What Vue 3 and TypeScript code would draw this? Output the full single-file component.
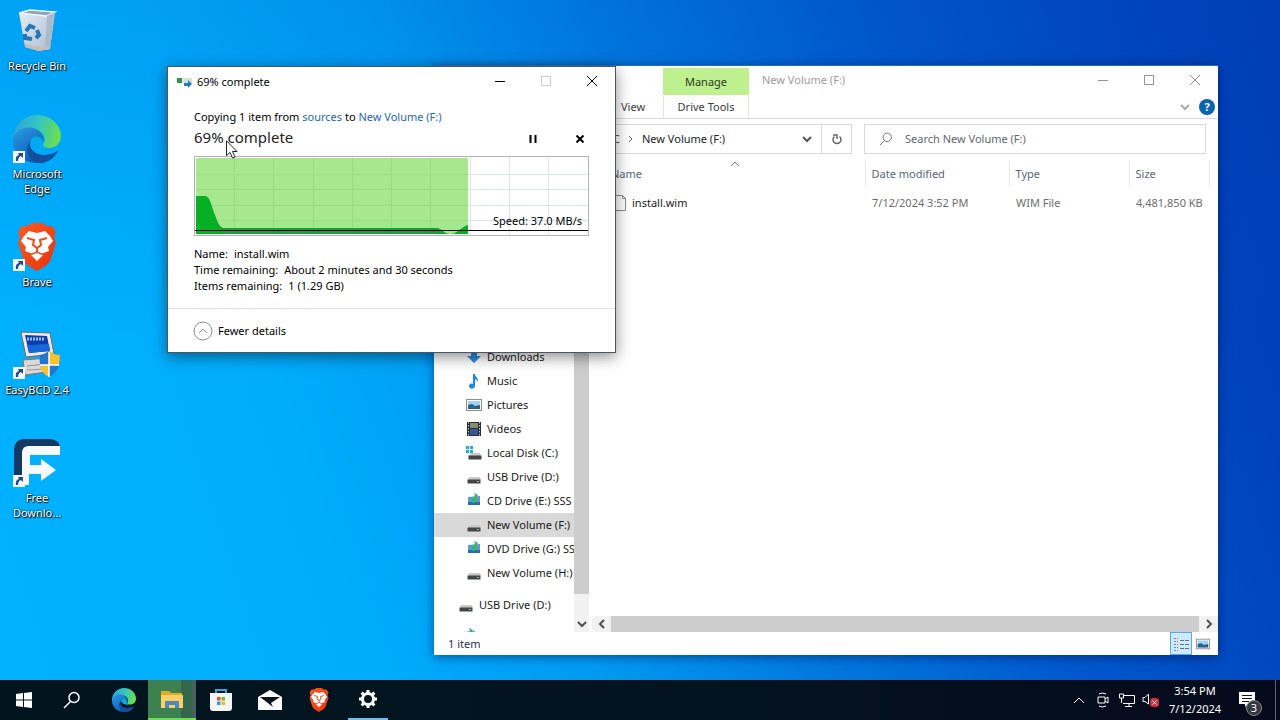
<script setup lang="ts">
import { ref } from 'vue'

interface Shortcut { label: string; icon: string; linked: boolean }
interface Place { label: string; icon: string; selected?: boolean }
interface FileRow { name: string; modified: string; type: string; size: string }

const shortcuts: Shortcut[] = [
  { label: 'Recycle Bin', icon: 'bin', linked: false },
  { label: 'Microsoft Edge', icon: 'edge', linked: true },
  { label: 'Brave', icon: 'brave', linked: true },
  { label: 'EasyBCD 2.4', icon: 'easybcd', linked: true },
  { label: 'Free Downlo...', icon: 'fdm', linked: true },
]

const places: Place[] = [
  { label: 'Downloads', icon: 'downloads' },
  { label: 'Music', icon: 'music' },
  { label: 'Pictures', icon: 'pictures' },
  { label: 'Videos', icon: 'videos' },
  { label: 'Local Disk (C:)', icon: 'sysdisk' },
  { label: 'USB Drive (D:)', icon: 'disk' },
  { label: 'CD Drive (E:) SSS', icon: 'disc' },
  { label: 'New Volume (F:)', icon: 'disk', selected: true },
  { label: 'DVD Drive (G:) SS', icon: 'disc' },
  { label: 'New Volume (H:)', icon: 'disk' },
]

const files: FileRow[] = [
  { name: 'install.wim', modified: '7/12/2024 3:52 PM', type: 'WIM File', size: '4,481,850 KB' },
]

const query = ref('')
const gridX = [39, 78, 118, 157, 196, 235, 275, 314, 353]
const gridY = [17, 32, 48, 63]
</script>

<template>
  <div class="screen">
    <svg class="sprite" aria-hidden="true">
      <defs>
        <linearGradient id="edgeTop" x1="0" y1="0.3" x2="1" y2="0.5">
          <stop offset="0" stop-color="#2aa5dc" /><stop offset="0.5" stop-color="#35c5c0" /><stop offset="1" stop-color="#6be04a" />
        </linearGradient>
        <linearGradient id="edgeLeft" x1="0" y1="0" x2="0.6" y2="1">
          <stop offset="0" stop-color="#2b9be4" /><stop offset="1" stop-color="#0d5bb4" />
        </linearGradient>
        <linearGradient id="binFill" x1="0" y1="0" x2="1" y2="1">
          <stop offset="0" stop-color="#e4eef5" /><stop offset="0.7" stop-color="#bccbdb" /><stop offset="1" stop-color="#c6b4b4" />
        </linearGradient>
        <linearGradient id="braveFill" x1="0" y1="0" x2="1" y2="1">
          <stop offset="0" stop-color="#fb5a22" /><stop offset="1" stop-color="#e8330f" />
        </linearGradient>
      </defs>
      <symbol id="i-bin" viewBox="0 0 48 48">
        <path d="M6 6 L17 3 L42 5 L37 42 L26 44 L12 40 Z" fill="url(#binFill)" />
        <path d="M6 6 L17 3 L42 5 L34 9 Z" fill="#8fa5b5" stroke="#eef6fb" stroke-width="1.5" />
        <path d="M34 9 L42 5 L37 42 L32 43 Z" fill="#aab9cb" />
        <path d="M12 37 L32 41 L37 39 L37 42 L26 44 L12 40 Z" fill="#cbbcbc" />
        <g fill="none" stroke="#2277b5" stroke-width="4">
          <path d="M13 24 L17 19 L22 21" /><path d="M24 23 L26 28 L23 31" /><path d="M19 32 L12 31 L12 27" />
        </g>
      </symbol>
      <symbol id="i-edge" viewBox="0 0 48 48">
        <path d="M0 24 A24 24 0 0 1 24 0 C38 0 48 10 48 21 C48 29 42 33 36 33 C31 33 29 31 31 28 C34 22 29 15 20 15 C10 15 3 20 0 27 Z" fill="url(#edgeTop)" />
        <path d="M0 25 C1 15 12 11 20 13 C28 15 32 22 30 27 C28 22 21 20 18 25 C12 34 20 45 31 47 C16 51 0 42 0 25 Z" fill="url(#edgeLeft)" />
        <path d="M18 25 C14 33 22 40 31 40 C38 40 42 37 45 36 C40 46 31 49 24 48 C13 44 12 31 18 25 Z" fill="#124f9c" />
        <path d="M18 25 C21 19 29 21 30 27 C28 31 32 33 36 33 C30 35 20 33 18 25 Z" fill="#07a9ef" />
      </symbol>
      <symbol id="i-brave" viewBox="0 0 40 48">
        <path d="M10 3 L15 0 H25 L30 3 L35 3 L39 9 L37 14 L39 20 L33 38 C32 41 24 46 20 48 C16 46 8 41 7 38 L1 20 L3 14 L1 9 L5 3 Z" fill="url(#braveFill)" />
        <path d="M12 8 L20 10 L28 8 L33 13 L36 18 L31 24 L32 28 L24 31 L20 29 L16 31 L8 28 L9 24 L4 18 L7 13 Z" fill="#fff" />
        <path d="M10 15 L17 17 L16 22 L20 25 L24 22 L23 17 L30 15" fill="none" stroke="#f24a1a" stroke-width="2" />
        <path d="M20 24 V30" stroke="#f24a1a" stroke-width="2" />
        <path d="M13 32 L20 29 L27 32 L20 39 Z" fill="#fff" stroke="#f24a1a" stroke-width="1.5" />
      </symbol>
      <symbol id="i-easybcd" viewBox="0 0 48 48">
        <path d="M10 29 L36 27 L40 40 L12 44 Z" fill="#dcdad8" stroke="#8e6e68" />
        <path d="M14 35 L33 33 M14 39 L32 38" stroke="#999" />
        <path d="M8 1 L37 2 L41 23 L13 26 Z" fill="#eeeae4" stroke="#6e6969" />
        <path d="M12 4 L34 5 L37 20 L16 22 Z" fill="#0b3fae" />
        <path d="M14 14 L36 13 L37 20 L16 22 Z" fill="#1766dc" />
        <path d="M14 8 L32 8" stroke="#9fbcf4" stroke-width="3" stroke-dasharray="2 1" />
        <path d="M27 24 Q32 23 36 20 Q41 24 47 24 Q48 40 36 46 Q25 40 27 24 Z" fill="#2475cf" />
        <path d="M36 20 Q41 24 47 24 Q47 29 46 34 H36 Z" fill="#f8c22c" />
        <path d="M36 34 V46 Q28 42 27 34 Z" fill="#f8c22c" />
        <path d="M36 21 V46 M27 34 H46" stroke="#fff" stroke-width="1.5" />
      </symbol>
      <symbol id="i-fdm" viewBox="0 0 48 48">
        <path d="M1 12 Q1 0 12 0 H37 Q47 1 47 9 V14 H16 V46 H1 Z" fill="#143a63" />
        <path d="M9 46 V14 Q9 7 16 7 H47 V16 H17 V26 H28 V20 L43 31 L28 42 V35 H16 V46 Z" fill="#f5faff" />
      </symbol>
      <symbol id="i-downloads" viewBox="0 0 16 16"><path d="M5 0 H11 V7 H15 L8 14 L1 7 H5 Z" fill="#2e8ae0" /></symbol>
      <symbol id="i-music" viewBox="0 0 16 16">
        <path d="M7 1 H9 C9 4 13 5 12 10 C12 7 10 7 9 6 V13 C9 16 3 17 3 13 C3 11 5 10 7 11 Z" fill="#2089de" />
      </symbol>
      <symbol id="i-pictures" viewBox="0 0 16 16">
        <rect x="0.5" y="2.5" width="15" height="11" fill="#fff" stroke="#8c8c8c" />
        <rect x="2" y="4" width="12" height="8" fill="#9fd2f5" /><path d="M2 12 V8 L6 7 L9 9 L14 8 V12 Z" fill="#2d5f70" />
        <path d="M2 9 H9 V11 H2 Z" fill="#1b6aa8" />
      </symbol>
      <symbol id="i-videos" viewBox="0 0 16 16">
        <rect x="1" y="1" width="14" height="14" fill="#292b33" />
        <path d="M2.5 1 V15 M13.5 1 V15" stroke="#cfcfcf" stroke-dasharray="1.5 1.5" />
        <rect x="4" y="2" width="8" height="5" fill="#8b8b70" /><rect x="4" y="8" width="8" height="6" fill="#35599d" />
      </symbol>
      <symbol id="i-disk" viewBox="0 0 16 16">
        <path d="M3 8 H14 L15 11 H2 Z" fill="#c9c9c9" /><rect x="1.5" y="10.5" width="13" height="4" rx="0.5" fill="#454545" />
        <rect x="11" y="12" width="2" height="1" fill="#76c98a" />
      </symbol>
      <symbol id="i-sysdisk" viewBox="0 0 16 16">
        <path d="M5 8 H14 L15 11 H3 Z" fill="#c9c9c9" /><rect x="2.5" y="10.5" width="13" height="4" fill="#454545" />
        <path d="M0 1 H3 V4 H0 Z M4 1 H7 V4 H4 Z M0 5 H3 V8 H0 Z M4 5 H7 V8 H4 Z" fill="#18b0e8" />
      </symbol>
      <symbol id="i-disc" viewBox="0 0 16 16">
        <path d="M2 4 L14 3 V12 H2 Z" fill="#5b9bd8" /><path d="M2 9 H14 V12 H2 Z" fill="#2c6ab4" />
        <path d="M6 10 Q4 5 9 3 L8 0 L12 2 L10 6 Q11 9 8 10 Z" fill="#3db569" />
      </symbol>
      <symbol id="i-down" viewBox="0 0 10 10"><path d="M1 3 L5 7 L9 3" fill="none" stroke="currentColor" stroke-width="2" /></symbol>
    </svg>

    <main class="desktop">
      <ul class="shortcuts">
        <li v-for="s in shortcuts" :key="s.label">
          <button type="button" class="shortcut">
            <span class="picture">
              <svg width="48" height="48" aria-hidden="true"><use :href="`#i-${s.icon}`" /></svg>
              <svg v-if="s.linked" class="arrow" viewBox="0 0 12 12" aria-hidden="true">
                <rect width="12" height="12" fill="#f6f8fb" /><path d="M5 2 H10 V7 L8 5 Q5 6 5 10 H3 Q2 5 6 4 Z" fill="#1c4c8c" />
              </svg>
            </span>
            <span class="caption">{{ s.label }}</span>
          </button>
        </li>
      </ul>

      <section class="explorer" aria-label="New Volume (F:)">
        <header class="titlebar">
          <button type="button" class="manage">Manage</button>
          <span class="heading">New Volume (F:)</span>
          <div class="controls">
            <button type="button" aria-label="Minimize"><svg viewBox="0 0 10 10"><path d="M0 5.5 H10" /></svg></button>
            <button type="button" aria-label="Maximize"><svg viewBox="0 0 10 10"><path d="M0.5 0.5 H9.5 V9.5 H0.5 Z" /></svg></button>
            <button type="button" aria-label="Close"><svg viewBox="0 0 10 10"><path d="M0 0 L10 10 M10 0 L0 10" /></svg></button>
          </div>
        </header>
        <nav class="ribbon" aria-label="Ribbon">
          <button type="button" class="view">View</button>
          <button type="button" class="drive">Drive Tools</button>
          <button type="button" class="expand" aria-label="Expand ribbon"><svg width="10" height="10"><use href="#i-down" /></svg></button>
          <button type="button" class="help" aria-label="Help">?</button>
        </nav>
        <div class="address">
          <div class="path">
            <button type="button" class="root">This PC</button>
            <svg class="sep" viewBox="0 0 6 8" aria-hidden="true"><path d="M1 1 L4 4 L1 7" /></svg>
            <button type="button" class="leaf">New Volume (F:)</button>
            <button type="button" class="history" aria-label="Previous locations"><svg width="10" height="10"><use href="#i-down" /></svg></button>
            <button type="button" class="refresh" aria-label="Refresh">
              <svg width="12" height="12" viewBox="0 0 12 12"><path d="M8.500 3.500 A4 4 0 1 1 3.500 3.500 M2 2 H6 V6" fill="none" stroke="#666" stroke-width="1.5" /></svg>
            </button>
          </div>
          <label class="search">
            <svg width="14" height="14" viewBox="0 0 14 14" aria-hidden="true"><path d="M5 9 L1 13 M5.5 8.5 A4.2 4.2 0 1 1 8 9.5 A4 4 0 0 1 5 8" fill="none" stroke="#777" /></svg>
            <input v-model="query" type="text" placeholder="Search New Volume (F:)" aria-label="Search New Volume (F:)" />
          </label>
        </div>
        <div class="body">
          <nav class="tree" aria-label="Folders">
            <ul>
              <li v-for="p in places" :key="p.label">
                <button type="button" :class="['place', { selected: p.selected }]">
                  <svg width="16" height="16" aria-hidden="true"><use :href="`#i-${p.icon}`" /></svg>{{ p.label }}
                </button>
              </li>
              <li class="outer">
                <button type="button" class="place"><svg width="16" height="16" aria-hidden="true"><use href="#i-disk" /></svg>USB Drive (D:)</button>
              </li>
              <li class="cut"><svg width="16" height="16" aria-hidden="true"><use href="#i-disc" /></svg></li>
            </ul>
          </nav>
          <div class="vbar">
            <div class="thumb"></div>
            <button type="button" aria-label="Scroll down"><svg width="10" height="10"><use href="#i-down" /></svg></button>
          </div>
          <div class="content">
            <svg class="sort" viewBox="0 0 10 6" aria-hidden="true"><path d="M1 5 L5 1 L9 5" /></svg>
            <table>
              <colgroup><col /><col class="c-date" /><col class="c-type" /><col class="c-size" /><col class="c-rest" /></colgroup>
              <thead><tr><th class="name">Name</th><th>Date modified</th><th>Type</th><th>Size</th><th aria-hidden="true"></th></tr></thead>
              <tbody>
                <tr v-for="f in files" :key="f.name">
                  <td class="name">
                    <span class="file"><svg width="14" height="16" viewBox="0 0 14 16" aria-hidden="true"><path d="M1.5 0.5 H9.5 L12.5 3.5 V15.5 H1.5 Z M9.5 0.5 V3.5 H12.5" fill="#fff" stroke="#8a8a8a" /></svg>{{ f.name }}</span>
                  </td>
                  <td>{{ f.modified }}</td><td>{{ f.type }}</td><td class="num">{{ f.size }}</td><td></td>
                </tr>
              </tbody>
            </table>
            <div class="hbar">
              <button type="button" aria-label="Scroll left"><svg class="to-left" width="10" height="10"><use href="#i-down" /></svg></button>
              <div class="thumb"></div>
              <button type="button" aria-label="Scroll right"><svg class="to-right" width="10" height="10"><use href="#i-down" /></svg></button>
            </div>
          </div>
        </div>
        <footer class="status">
          <span>1 item</span>
          <div class="modes">
            <button type="button" class="details" aria-label="Details view">
              <svg width="16" height="16" viewBox="0 0 16 16"><path d="M1 2.5 H5 M1 5.5 H5 M1 8.5 H5 M1 11.5 H5 M1 14.5 H5" stroke="#a0788c" stroke-dasharray="2 1" /><path d="M7 4.5 H11 M12 4.5 H16 M7 8.5 H11 M12 8.5 H16 M7 12.5 H11 M12 12.5 H16" stroke="#5d6f80" /></svg>
            </button>
            <button type="button" aria-label="Thumbnail view"><svg width="14" height="14"><use href="#i-pictures" /></svg></button>
          </div>
        </footer>
      </section>

      <section class="dialog" role="dialog" aria-label="69% complete">
        <header class="caption-row">
          <svg width="16" height="12" viewBox="0 0 16 12" aria-hidden="true">
            <rect y="1" width="5" height="5" fill="#2f9450" /><rect x="6" y="1" width="9" height="5" fill="#d5e4d8" />
            <path d="M7 6 H11 V3 L15 7 L11 11 V9 H7 Z" fill="#2b7ac4" />
          </svg>
          <span>69% complete</span>
          <div class="controls">
            <button type="button" aria-label="Minimize"><svg viewBox="0 0 10 10"><path d="M0 5.5 H10" /></svg></button>
            <button type="button" aria-label="Maximize" disabled><svg viewBox="0 0 10 10"><path d="M0.5 0.5 H9.5 V9.5 H0.5 Z" /></svg></button>
            <button type="button" aria-label="Close"><svg viewBox="0 0 10 10"><path d="M0 0 L10 10 M10 0 L0 10" /></svg></button>
          </div>
        </header>
        <div class="progress">
          <p class="route">Copying 1 item from <a href="#sources">sources</a> to <a href="#volume">New Volume (F:)</a></p>
          <div class="summary">
            <h1>69% complete</h1>
            <button type="button" aria-label="Pause"><svg width="8" height="8" viewBox="0 0 8 8"><path d="M1.5 0 V8 M6.5 0 V8" /></svg></button>
            <button type="button" aria-label="Cancel"><svg width="8" height="8" viewBox="0 0 8 8"><path d="M0.5 0.5 L7.5 7.5 M7.5 0.5 L0.5 7.5" /></svg></button>
          </div>
          <div class="chart">
            <svg viewBox="0 0 393 78" preserveAspectRatio="none" aria-hidden="true">
              <path v-for="x in gridX" :key="`x${x}`" :d="`M${x}.5 0 V78`" stroke="#d6e6ea" />
              <path v-for="y in gridY" :key="`y${y}`" :d="`M0 ${y}.5 H393`" stroke="#d6e6ea" />
              <rect x="1" y="1" width="272" height="76" fill="#a7e78d" />
              <path v-for="x in gridX.slice(0, 6)" :key="`gx${x}`" :d="`M${x}.5 1 V77`" stroke="#9bda83" />
              <path v-for="y in gridY" :key="`gy${y}`" :d="`M1 ${y}.5 H273`" stroke="#9bda83" />
              <path d="M1 39 H10 C15 39 16 48 20 58 C23 66 25 71 29 71 H243 C248 73 250 77 255 77 C262 77 266 70 273 68 V77 H1 Z" fill="#06b025" />
              <path d="M29 72 H243 L248 77 H29 Z" fill="#219b43" />
              <path d="M0 73.5 H393" stroke="#000" />
            </svg>
            <span class="speed">Speed: 37.0 MB/s</span>
          </div>
          <dl>
            <div><dt>Name:</dt><dd>install.wim</dd></div>
            <div><dt>Time remaining:</dt><dd>About 2 minutes and 30 seconds</dd></div>
            <div><dt>Items remaining:</dt><dd>1 (1.29 GB)</dd></div>
          </dl>
        </div>
        <footer class="more">
          <button type="button">
            <svg width="20" height="20" viewBox="0 0 20 20" aria-hidden="true"><circle cx="10" cy="10" r="9" /><path d="M6 12 L10 8 L14 12" /></svg>
            Fewer details
          </button>
        </footer>
      </section>

      <svg class="cursor" width="12" height="19" viewBox="0 0 12 19" aria-hidden="true">
        <path d="M0.5 0.8 V15.5 L4 12.5 L6.5 18 L9 17 L6.5 11.5 H11 Z" fill="#fff" stroke="#222" />
      </svg>
    </main>

    <footer class="taskbar">
      <button type="button" class="start" aria-label="Start">
        <svg width="16" height="16" viewBox="0 0 16 16"><path d="M0 2 L7 1 V7.5 H0 Z M8 1 L16 0 V7.5 H8 Z M0 8.5 H7 V15 L0 14 Z M8 8.5 H16 V16 L8 15 Z" fill="#fff" /></svg>
      </button>
      <button type="button" class="find" aria-label="Search">
        <svg width="18" height="18" viewBox="0 0 18 18"><circle cx="11" cy="6.500" r="5" fill="none" stroke="#fff" stroke-width="1.5" /><path d="M7.500 10.500 L1 17" stroke="#fff" stroke-width="1.5" /></svg>
      </button>
      <button type="button" aria-label="Microsoft Edge"><svg width="24" height="24"><use href="#i-edge" /></svg></button>
      <button type="button" class="busy" aria-label="File Explorer">
        <svg width="24" height="24" viewBox="0 0 24 24"><path d="M1 4 H9 L11 6 H22 V21 H1 Z" fill="#e3a92d" /><path d="M1 8 H23 V21 H1 Z" fill="#fbd163" /><path d="M5 14 H19 V21 H15 V18 H9 V21 H5 Z" fill="#4b88c6" /></svg>
      </button>
      <button type="button" aria-label="Microsoft Store">
        <svg width="24" height="24" viewBox="0 0 24 24"><path d="M7 6 V2 H17 V6" fill="none" stroke="#38a4dc" stroke-width="2" /><path d="M1 5 H23 V20 Q23 23 20 23 H4 Q1 23 1 20 Z" fill="#f5f5f5" /><path d="M8 9 H11.500 V12.500 H8 Z" fill="#e8512c" /><path d="M12.500 9 H16 V12.500 H12.500 Z" fill="#7cb82f" /><path d="M8 13.500 H11.500 V17 H8 Z" fill="#2a9fe0" /><path d="M12.500 13.500 H16 V17 H12.500 Z" fill="#f7b718" /></svg>
      </button>
      <button type="button" aria-label="Mail">
        <svg width="24" height="20" viewBox="0 0 24 20"><path d="M0 7 L12 0 L24 7 V20 H0 Z" fill="#fff" /><path d="M2 7 H22 L13 13 L15 17 Z" fill="#06141d" /></svg>
      </button>
      <button type="button" aria-label="Brave"><svg width="22" height="24"><use href="#i-brave" /></svg></button>
      <button type="button" class="open" aria-label="Settings">
        <svg width="20" height="20" viewBox="0 0 20 20"><circle cx="10" cy="10" r="5.500" fill="none" stroke="#fff" stroke-width="3" /><path d="M10 1 V4 M10 16 V19 M1 10 H4 M16 10 H19 M3.600 3.600 L5.700 5.700 M14.300 14.300 L16.400 16.400 M3.600 16.400 L5.700 14.300 M14.300 5.700 L16.400 3.600" stroke="#fff" stroke-width="3" /></svg>
      </button>
      <div class="tray">
        <button type="button" aria-label="Show hidden icons"><svg width="12" height="8" viewBox="0 0 12 8"><path d="M1 7 L6 2 L11 7" /></svg></button>
        <button type="button" aria-label="Meet now"><svg width="12" height="16" viewBox="0 0 12 16"><path d="M2 2 Q5 0 9 2 M2 14 Q5 16 9 14 M1 5 H8 V11 H1 Z M8 7 L11 5 V11 L8 9" /></svg></button>
        <button type="button" aria-label="Network"><svg width="16" height="14" viewBox="0 0 16 14"><path d="M5 2.500 H15.500 V10.500 H4 M10 10.500 V13 M6 13.500 H13 M0.500 1 H4.500 V5 H0.500 Z M2.500 5 V10" /></svg></button>
        <button type="button" aria-label="Volume muted"><svg width="18" height="16" viewBox="0 0 18 16"><path d="M1 5.500 H3 L6.500 2 V12 L3 9.500 H1 Z" /><rect class="alert" x="8" y="6" width="9" height="9" rx="3" /><path d="M10.500 8.500 L14.500 12.500 M14.500 8.500 L10.500 12.500" /></svg></button>
        <button type="button" class="clock"><span>3:54 PM</span><span>7/12/2024</span></button>
        <button type="button" class="notes" aria-label="Notifications">
          <svg width="16" height="16" viewBox="0 0 16 16"><path class="solid" d="M0 0 H16 V12 H9 L6 15 V12 H0 Z" /><path class="rule" d="M3 3.500 H13 M3 6.500 H13 M3 9.500 H10" /></svg>
          <span class="badge">3</span>
        </button>
        <button type="button" class="peek" aria-label="Show desktop"></button>
      </div>
    </footer>
  </div>
</template>

<style>
html, body { margin: 0; }
</style>

<style scoped>
.screen {
  min-height: 100vh;
  display: flex;
  flex-direction: column;
  overflow: hidden;
  font: 11px/16px "Noto Sans", "Open Sans", sans-serif;
  color: #000;
}
* { box-sizing: border-box; }
button { font: inherit; color: inherit; background: none; border: 0; padding: 0; margin: 0; }
ul, dl, dd, p, h1 { margin: 0; padding: 0; list-style: none; font-weight: 400; }
svg { display: block; flex: none; }
.sprite { position: absolute; width: 0; height: 0; }
.desktop {
  position: relative;
  flex: 1;
  background:
    linear-gradient(180deg, rgba(0, 80, 190, 0.14), rgba(0, 80, 190, 0) 50%),
    linear-gradient(72deg, #00b2ff 0%, #00adfd 24%, #009af2 40%, #007ae0 54%, #0058cc 72%, #0042ba 90%, #003cb4 100%);
}
.shortcuts { width: 74px; padding-top: 7px; display: grid; grid-auto-rows: 108px; }
.shortcut { width: 100%; display: flex; flex-direction: column; align-items: center; gap: 3px; color: #fff; line-height: 15px; text-shadow: 1px 1px 1px #000, 0 0 2px #000; }
.caption { max-width: 70px; }
.picture { position: relative; width: 48px; height: 48px; }
.arrow { position: absolute; left: 0; bottom: 0; width: 12px; height: 12px; }

.explorer {
  position: absolute;
  inset: 65px 62px 25px 434px;
  display: flex;
  flex-direction: column;
  background: #fff;
  border: 1px solid #2c6cc0;
  border-width: 1px 0 0;
  box-shadow: 0 2px 10px rgba(0, 10, 60, 0.5);
}
.titlebar { height: 29px; display: flex; align-items: flex-start; padding-left: 229px; color: #919191; }
.manage { width: 86px; height: 27px; margin-top: 2px; background: #bff08f; color: #2d3a22; }
.heading { margin: 6px 0 0 13px; color: #a09a9a; }
.controls { margin-left: auto; display: flex; }
.controls button { width: 46px; height: 28px; display: grid; place-items: center; }
.controls svg { width: 10px; height: 10px; fill: none; stroke: currentColor; overflow: visible; }
.ribbon { height: 24px; display: flex; align-items: center; padding-left: 187px; border-bottom: 1px solid #dadada; color: #3c3c3c; }
.view { width: 42px; text-align: left; }
.drive { width: 86px; height: 22px; border: 1px solid #d8ead0; border-width: 0 1px; }
.expand { margin-left: auto; color: #aaa; }
.help { width: 16px; height: 16px; margin: 0 3px 0 9px; border-radius: 50%; background: #0a64ad; color: #fff; font-weight: 700; }
.address { display: flex; gap: 12px; padding: 5px 12px 0 0; }
.path { flex: 1; height: 30px; display: flex; align-items: center; border: 1px solid #d9d9d9; color: #222; }
.root { width: 185px; text-align: right; color: #555; }
.sep { width: 6px; height: 8px; margin: 0 8px; fill: none; stroke: #666; }
.history { margin-left: auto; width: 28px; display: grid; place-items: center; color: #555; }
.refresh { width: 30px; align-self: stretch; border-left: 1px solid #d9d9d9; display: grid; place-items: center; }
.search { width: 342px; display: flex; align-items: center; gap: 12px; padding-left: 14px; border: 1px solid #d9d9d9; }
.search input { flex: 1; min-width: 0; border: 0; outline: 0; padding: 0; background: none; font: inherit; color: #333; }
.search input::placeholder { color: #666; opacity: 1; }
.body { flex: 1; min-height: 0; display: flex; }
.tree { width: 140px; overflow: hidden; display: flex; flex-direction: column; justify-content: flex-end; }
.place { width: 100%; height: 24px; display: flex; align-items: center; gap: 5px; padding-left: 32px; white-space: nowrap; color: #1a1a1a; }
.selected { background: #d9d9d9; }
.outer { margin-top: 8px; }
.outer .place { padding-left: 24px; }
.cut { height: 15px; padding: 11px 0 0 27px; overflow: hidden; }
.vbar { width: 15px; display: flex; flex-direction: column; background: #f1f1f1; }
.vbar .thumb { flex: 1; background: #cdcdcd; margin-bottom: 22px; }
.vbar button { height: 16px; display: grid; place-items: center; color: #505050; }
.content { flex: 1; position: relative; min-width: 0; display: flex; flex-direction: column; }
.sort { position: absolute; left: 141px; top: 7px; width: 10px; height: 6px; fill: none; stroke: #777; }
table { width: 100%; margin-top: 6px; table-layout: fixed; border-collapse: collapse; color: #6d6d6d; white-space: nowrap; }
.c-date { width: 144px; } .c-type { width: 120px; } .c-size { width: 80px; } .c-rest { width: 9px; }
th { height: 27px; padding: 0 6px; font-weight: 400; text-align: left; color: #5a6478; border-left: 1px solid #e8e8e8; }
th.name { padding-left: 22px; border-left: 0; }
td { height: 32px; padding: 0 7px; }
td.name { padding-left: 24px; color: #1a1a1a; }
.file { display: flex; align-items: center; gap: 5px; }
.num { text-align: right; }
.hbar { margin-top: auto; height: 16px; padding-left: 3px; display: flex; background: #f1f1f1; background-clip: content-box; }
.hbar .thumb { flex: 1; background: #cdcdcd; }
.hbar button { width: 19px; display: grid; place-items: center; color: #505050; }
.to-left { transform: rotate(90deg); }
.to-right { transform: rotate(-90deg); }
.status { height: 23px; display: flex; align-items: center; justify-content: space-between; padding-left: 14px; color: #2a2f50; }
.modes { display: flex; align-self: stretch; padding-right: 4px; }
.modes button { width: 22px; display: grid; place-items: center; }
.details { background: #cdeafb; border: 1px solid #5aaade; }

.dialog {
  position: absolute;
  left: 167px;
  top: 66px;
  width: 449px;
  display: flex;
  flex-direction: column;
  background: #fff;
  border: 1px solid #4c5660;
  box-shadow: 0 4px 14px rgba(0, 0, 0, 0.45);
}
.caption-row { height: 40px; display: flex; align-items: flex-start; padding-left: 9px; }
.caption-row > svg { margin-top: 10px; }
.caption-row > span { margin: 7px 0 0 4px; }
.dialog .controls button:disabled { color: #ccc; }
.progress { padding: 2px 26px 14px; }
.route a { color: #1b68b5; text-decoration: none; }
.summary { display: flex; align-items: center; height: 31px; }
h1 { flex: 1; font-size: 15px; line-height: 22px; padding-bottom: 8px; color: #222; }
.summary button { width: 20px; height: 20px; margin: 0 0 4px 27px; display: grid; place-items: center; }
.summary button:last-child { margin-right: -1px; }
.summary path { stroke: #000; stroke-width: 2; fill: none; }
.chart { position: relative; height: 80px; border: 1px solid #b4b4b4; }
.chart svg { width: 100%; height: 100%; }
.speed { position: absolute; right: 6px; bottom: 6px; }
dl { padding-top: 10px; }
dl div { display: flex; gap: 6px; }
.more { height: 44px; display: flex; align-items: center; padding-left: 25px; border-top: 1px solid #e2e2e2; }
.more button { display: flex; align-items: center; gap: 5px; }
.more svg { fill: none; stroke: #8c8c8c; }
.cursor { position: absolute; left: 226px; top: 140px; }

.taskbar { height: 40px; display: flex; background: linear-gradient(90deg, #02151e, #031420 50%, #050a1c); color: #fff; }
.taskbar button { display: grid; place-items: center; }
.taskbar > button { width: 49px; }
.taskbar > .start { width: 48px; }
.taskbar > .find { width: 48px; margin-right: 3px; }
.taskbar > .busy { width: 48px; background: linear-gradient(90deg, #3d8150 33px, #34664a 33px, #34664a 44px, #46605e 44px); border-bottom: 2px solid #6be04c; }
.taskbar > .open { border-bottom: 2px solid #76b9ed; width: 40px; margin-left: 5px; }
.tray { margin-left: auto; display: flex; }
.tray button { width: 24px; }
.tray svg { fill: none; stroke: #fff; }
.tray .alert { fill: #cf2f3f; stroke: none; }
.tray .clock { width: 64px; display: flex; flex-direction: column; align-items: center; justify-content: center; line-height: 18px; }
.tray .notes { position: relative; width: 40px; }
.tray .solid { fill: #fff; stroke: none; }
.tray .rule { stroke: #0a1020; }
.badge { position: absolute; left: 19px; bottom: 4px; width: 16px; height: 16px; border-radius: 50%; background: #32373f; border: 1px solid #888; line-height: 14px; text-align: center; }
.tray .peek { width: 5px; margin-left: 8px; border-left: 1px solid #5a606c; }
</style>
